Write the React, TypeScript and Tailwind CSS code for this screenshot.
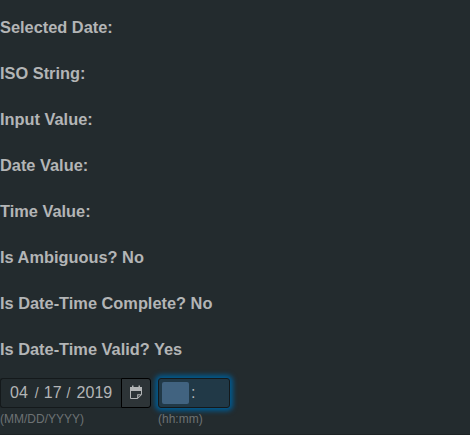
const rows = [
  'Selected Date:',
  'ISO String:',
  'Input Value:',
  'Date Value:',
  'Time Value:',
  'Is Ambiguous? No',
  'Is Date-Time Complete? No',
  'Is Date-Time Valid? Yes',
];

function CalendarIcon() {
  return (
    <svg width="14" height="16" viewBox="0 0 14 16" fill="none">
      <path d="M1 2h2V0.5h1.5V2h5V0.5H11V2h2v4H1z" fill="#b3b5b6" />
      <path d="M1.5 5v8.5h7.2l3.8-3.8V5" stroke="#b3b5b6" />
      <path d="M8.2 14V9.2h4.8z" fill="#b3b5b6" />
      <path d="M9.3 12.2v-1.9h1.9z" fill="#2d3437" />
    </svg>
  );
}

export default function App() {
  return (
    <main className="h-[435px] w-[470px] overflow-hidden border-b border-[#1d2325] bg-[#232b2e] pt-[15px] font-['Liberation_Sans',Arial,sans-serif] text-[#b3b5b6]">
      <div className="flex flex-col gap-[22px]">
        {rows.map((row) => (
          <h3 key={row} className="text-[16.38px] leading-6 font-bold">
            {row}
          </h3>
        ))}
      </div>
      <div className="mt-[17px] flex gap-[7px]">
        <div className="w-[151px]">
          <div className="flex h-[30px]">
            <div className="flex w-[121px] items-center rounded-l-[3px] border border-r-0 border-[#14191b] bg-[#232b2e] pl-[9px] text-base">
              <span>04</span>
              <span className="w-4 pl-[7px] text-sm">/</span>
              <span>17</span>
              <span className="w-[15px] pl-[5px] text-sm">/</span>
              <span>2019</span>
            </div>
            <button className="flex w-[30px] items-center justify-center rounded-r-[3px] border border-black bg-[#2d3437]">
              <CalendarIcon />
            </button>
          </div>
          <p className="mt-[3px] text-xs leading-4 text-[#6d7274]">(MM/DD/YYYY)</p>
        </div>
        <div className="w-[72px]">
          <div className="flex h-[30px] items-center rounded-[3px] border border-[#14191b] bg-[#213947] px-[3px] text-base shadow-[0_0_5px_3px_#005a91]">
            <span className="h-[22px] w-[27px] rounded-[2px] bg-[#416380]" />
            <span className="pl-[2px]">:</span>
          </div>
          <p className="mt-[3px] text-xs leading-4 text-[#6d7274]">(hh:mm)</p>
        </div>
      </div>
    </main>
  );
}
